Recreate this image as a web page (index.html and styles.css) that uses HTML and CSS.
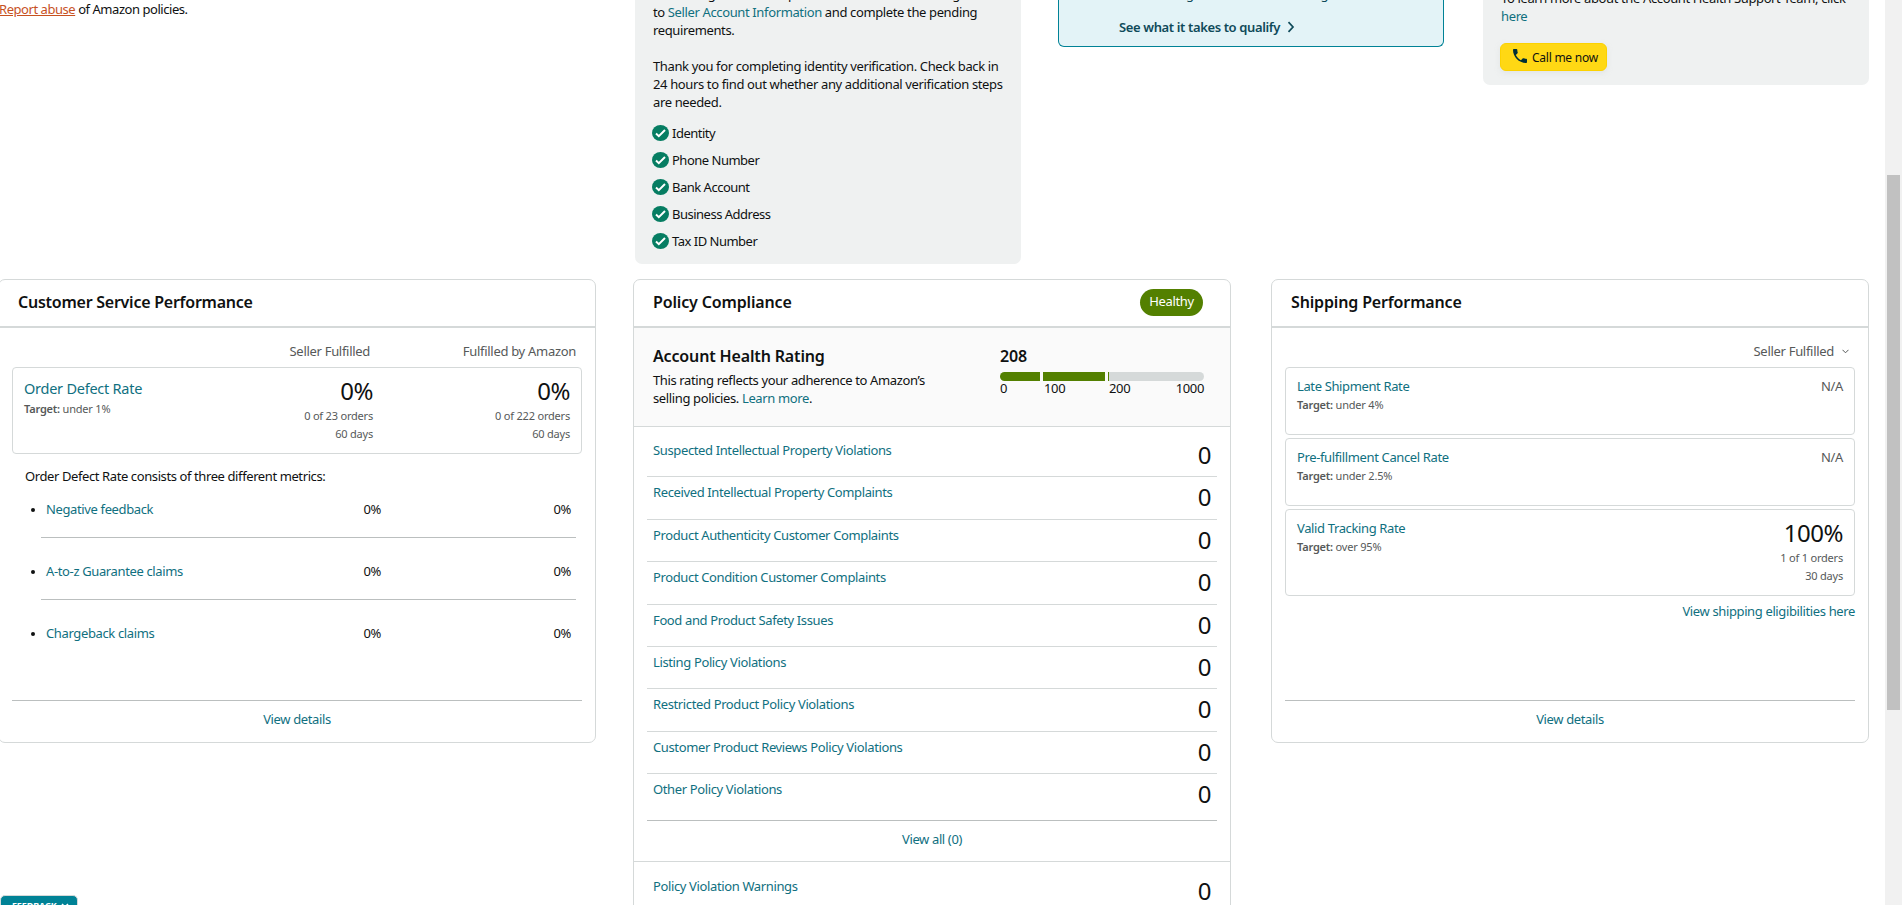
FILE: index.html
```html
<!DOCTYPE html>
<html lang="en">
<head>
    <meta charset="UTF-8">
    <meta name="viewport" content="width=device-width, initial-scale=1.0">
    <title>Account Health</title>
    <link rel="stylesheet" href="styles.css">
</head>
<body>
    <svg class="defs" width="0" height="0">
        <symbol id="check" viewBox="0 0 17 16">
            <ellipse cx="8.5" cy="8" rx="8.5" ry="8" fill="#067d62"/>
            <path d="M4 8.6l2.8 2.6L13 5" fill="none" stroke="#fff" stroke-width="2"/>
        </symbol>
    </svg>

    <main class="page">
        <section class="top">
            <p class="report"><a class="report-link" href="#">Report abuse</a> of Amazon policies.</p>

            <div class="panel verify">
                <p>be missing some other piece of information or selling<br>to <a href="#">Seller Account Information</a> and complete the pending<br>requirements.</p>
                <p>Thank you for completing identity verification. Check back in<br>24 hours to find out whether any additional verification steps<br>are needed.</p>
                <ul class="checks">
                    <li><svg class="check"><use href="#check"/></svg>Identity</li>
                    <li><svg class="check"><use href="#check"/></svg>Phone Number</li>
                    <li><svg class="check"><use href="#check"/></svg>Bank Account</li>
                    <li><svg class="check"><use href="#check"/></svg>Business Address</li>
                    <li><svg class="check"><use href="#check"/></svg>Tax ID Number</li>
                </ul>
            </div>

            <div class="panel qualify">
                <p class="qualify-text">deactivating without first reaching out</p>
                <a class="qualify-link" href="#">See what it takes to qualify
                    <svg width="8" height="12" viewBox="0 0 8 12"><path d="M1.5 1.2L6 6l-4.5 4.8" fill="none" stroke="#0f4a5a" stroke-width="1.7"/></svg>
                </a>
            </div>

            <div class="panel support">
                <p>To learn more about the Account Health Support Team, click<br><a href="#">here</a></p>
                <button class="call">
                    <svg width="14" height="14" viewBox="3 3 18 18"><path fill="#002f36" d="M6.62 10.79c1.44 2.83 3.76 5.14 6.59 6.59l2.2-2.2c.27-.27.67-.36 1.02-.24 1.12.37 2.33.57 3.57.57.55 0 1 .45 1 1V20c0 .55-.45 1-1 1-9.390 0-17-7.610-17-17 0-.55.45-1 1-1h3.5c.55 0 1 .45 1 1 0 1.25.2 2.45.57 3.57.11.35.03.74-.25 1.02l-2.2 2.2z"/></svg>
                    <span>Call me now</span>
                </button>
            </div>
        </section>

        <section class="cards">
            <div class="card service">
                <h2 class="card-title">Customer Service Performance</h2>
                <div class="card-body">
                    <div class="columns"><span>Seller Fulfilled</span><span>Fulfilled by Amazon</span></div>
                    <div class="metric metric-main">
                        <div class="metric-name">
                            <a href="#">Order Defect Rate</a>
                            <small><b>Target:</b> under 1%</small>
                        </div>
                        <div class="metric-value">
                            <strong>0%</strong>
                            <small>0 of 23 orders</small>
                            <small>60 days</small>
                        </div>
                        <div class="metric-value">
                            <strong>0%</strong>
                            <small>0 of 222 orders</small>
                            <small>60 days</small>
                        </div>
                    </div>
                    <p class="consists">Order Defect Rate consists of three different metrics:</p>
                    <ul class="sub-metrics">
                        <li><a href="#">Negative feedback</a><span>0%</span><span>0%</span></li>
                        <li><a href="#">A-to-z Guarantee claims</a><span>0%</span><span>0%</span></li>
                        <li><a href="#">Chargeback claims</a><span>0%</span><span>0%</span></li>
                    </ul>
                    <div class="card-footer"><a href="#">View details</a></div>
                </div>
            </div>

            <div class="card policy">
                <div class="card-title">
                    <h2>Policy Compliance</h2>
                    <span class="badge">Healthy</span>
                </div>
                <div class="rating">
                    <div class="rating-text">
                        <h2>Account Health Rating</h2>
                        <p>This rating reflects your adherence to Amazon’s<br>selling policies. <a href="#">Learn more</a>.</p>
                    </div>
                    <div class="rating-score">
                        <h2>208</h2>
                        <div class="bar"><i></i><i></i><i></i></div>
                        <div class="scale"><span>0</span><span>100</span><span>200</span><span>1000</span></div>
                    </div>
                </div>
                <ul class="violations">
                    <li><a href="#">Suspected Intellectual Property Violations</a><span>0</span></li>
                    <li><a href="#">Received Intellectual Property Complaints</a><span>0</span></li>
                    <li><a href="#">Product Authenticity Customer Complaints</a><span>0</span></li>
                    <li><a href="#">Product Condition Customer Complaints</a><span>0</span></li>
                    <li><a href="#">Food and Product Safety Issues</a><span>0</span></li>
                    <li><a href="#">Listing Policy Violations</a><span>0</span></li>
                    <li><a href="#">Restricted Product Policy Violations</a><span>0</span></li>
                    <li><a href="#">Customer Product Reviews Policy Violations</a><span>0</span></li>
                    <li><a href="#">Other Policy Violations</a><span>0</span></li>
                </ul>
                <div class="view-all"><a href="#">View all (0)</a></div>
                <ul class="violations warnings">
                    <li><a href="#">Policy Violation Warnings</a><span>0</span></li>
                </ul>
            </div>

            <div class="card shipping">
                <h2 class="card-title">Shipping Performance</h2>
                <div class="card-body">
                    <div class="columns">
                        <span>Seller Fulfilled</span>
                        <svg width="7" height="5" viewBox="0 0 7 5"><path d="M.5.8l3 3 3-3" fill="none" stroke="#565959"/></svg>
                    </div>
                    <div class="metric">
                        <div class="metric-name">
                            <a href="#">Late Shipment Rate</a>
                            <small><b>Target:</b> under 4%</small>
                        </div>
                        <div class="metric-value na">N/A</div>
                    </div>
                    <div class="metric">
                        <div class="metric-name">
                            <a href="#">Pre-fulfillment Cancel Rate</a>
                            <small><b>Target:</b> under 2.5%</small>
                        </div>
                        <div class="metric-value na">N/A</div>
                    </div>
                    <div class="metric tracking">
                        <div class="metric-name">
                            <a href="#">Valid Tracking Rate</a>
                            <small><b>Target:</b> over 95%</small>
                        </div>
                        <div class="metric-value">
                            <strong>100%</strong>
                            <small>1 of 1 orders</small>
                            <small>30 days</small>
                        </div>
                    </div>
                    <a class="eligibilities" href="#">View shipping eligibilities here</a>
                    <div class="card-footer"><a href="#">View details</a></div>
                </div>
            </div>
        </section>
    </main>

    <div class="scrollbar"><div class="thumb"></div></div>
    <button class="feedback">FEEDBACK
        <svg width="8" height="6" viewBox="0 0 8 6"><path d="M1 1l3 3 3-3" fill="none" stroke="#fff" stroke-width="1.5"/></svg>
    </button>
</body>
</html>
```

FILE: styles.css
```css
* {
    box-sizing: border-box;
}
body {
    margin: 0;
    height: 905px;
    overflow: hidden;
    display: flex;
    font-family: "Noto Sans", "Open Sans", sans-serif;
    font-size: 13px;
    line-height: 18px;
    letter-spacing: -0.37px;
    color: #0f1111;
    background: #fff;
}
h2, p, ul {
    margin: 0;
    padding: 0;
}
ul {
    list-style: none;
}
a {
    color: #10707f;
    text-decoration: none;
}
h2 {
    font-size: 16px;
    line-height: 24px;
    font-weight: 600;
    letter-spacing: -0.15px;
}
.defs {
    position: absolute;
}
.page {
    flex: 1;
    height: 905px;
    overflow: hidden;
}

/* top panels */
.top {
    display: grid;
    grid-template-columns: 635px 386px 386px 386px;
    align-items: start;
    height: 279px;
}
.report {
    margin-left: -1px;
    letter-spacing: -0.45px;
}
.report-link {
    color: #c7511f;
    text-decoration: underline;
}
.panel {
    border-radius: 0 0 7px 7px;
    background: #eff1f1;
}
.verify {
    height: 264px;
    padding: 0 18px;
    white-space: nowrap;
}
.verify p {
    margin-top: -15px;
}
.verify p + p {
    margin-top: 18px;
}
.checks {
    margin-top: 8px;
    letter-spacing: -0.5px;
}
.checks li {
    display: flex;
    align-items: center;
    height: 27px;
    gap: 3px;
}
.check {
    width: 17px;
    height: 16px;
    margin-left: -1px;
}
.top .qualify {
    margin-left: 37px;
    width: 386px;
    height: 47px;
    padding: 0 60px;
    background: #e3f3f7;
    border: 1px solid #008296;
    border-top: 0;
    border-radius: 0 0 6px 6px;
}
.qualify-text {
    margin-top: -15px;
    color: #0f4a5a;
    letter-spacing: 0;
}
.qualify-link {
    display: flex;
    align-items: center;
    gap: 7px;
    margin-top: 15px;
    color: #0f4a5a;
    font-weight: 600;
}
.support {
    margin-left: 76px;
    width: 386px;
    height: 85px;
    padding: 0 18px;
    white-space: nowrap;
}
.support p {
    margin-top: -11px;
}
.support p + .call {
    margin: 18px 0 0 -1px;
}
.call {
    display: flex;
    align-items: center;
    gap: 5px;
    width: 107px;
    height: 28px;
    padding: 0 0 0 12px;
    border: 1px solid #fcd200;
    border-radius: 6px;
    background: #ffd814;
    box-shadow: 0 2px 5px rgba(213, 217, 217, .5);
    font: inherit;
    font-size: 12px;
    letter-spacing: -0.25px;
    color: #0f1111;
}
.call span {
    margin-top: 2px;
}
.call svg {
    margin-top: -2px;
}

/* cards */
.cards {
    display: flex;
    align-items: flex-start;
    gap: 37px;
    margin-left: -2px;
}
.card {
    width: 598px;
    height: 464px;
    border: 1px solid #d5d9d9;
    border-radius: 7px;
}
.card + .shipping {
    margin-left: 3px;
}
.policy {
    height: 700px;
}
.card-title {
    display: flex;
    justify-content: space-between;
    height: 48px;
    padding: 10px 27px 0 19px;
    border-bottom: 2px solid #d5d9d9;
}
.service .card-title {
    letter-spacing: -0.25px;
}
.badge {
    width: 63px;
    height: 27px;
    margin-top: -1px;
    border-radius: 14px;
    background: #538000;
    color: #fff;
    line-height: 25px;
    text-align: center;
}
.card-body {
    display: flex;
    flex-direction: column;
    height: 414px;
    padding: 14px 13px 0;
}
.columns {
    display: flex;
    justify-content: flex-end;
    height: 25px;
    letter-spacing: -0.3px;
    color: #565959;
}
.service .columns {
    padding-right: 6px;
}
.service .columns span:last-child {
    width: 206px;
    text-align: right;
}
.shipping .columns {
    padding-right: 6px;
    gap: 8px;
}
.shipping .columns svg {
    margin-top: 7px;
}
.metric {
    display: flex;
    height: 68px;
    margin-bottom: 3px;
    padding: 9px 11px;
    border: 1px solid #d5d9d9;
    border-radius: 4px;
}
.metric-main,
.tracking {
    height: 87px;
}
.metric-name {
    flex: 1;
}
.metric small {
    display: block;
    font-size: 11px;
    letter-spacing: -0.2px;
    color: #565959;
}
.metric small b {
    font-weight: 600;
}
.metric-name small {
    margin-top: 1px;
}
.metric-main .metric-name a {
    display: block;
    font-size: 14.5px;
    line-height: 22px;
    letter-spacing: -0.25px;
}
.metric-value {
    width: 197px;
    text-align: right;
}
.metric-value strong {
    display: block;
    height: 30px;
    font-size: 24px;
    line-height: 27px;
    font-weight: 400;
    letter-spacing: -0.5px;
}
.na {
    color: #565959;
}
.consists {
    margin: 10px 0 0 13px;
    letter-spacing: -0.4px;
}
.sub-metrics {
    margin: 0 6px 0 29px;
}
.sub-metrics li {
    display: flex;
    height: 62px;
    padding: 24px 5px 0 6px;
}
.sub-metrics li:first-child {
    height: 52px;
    padding-top: 15px;
}
.sub-metrics li + li {
    border-top: 1px solid #bbbfbf;
}
.sub-metrics li::before {
    content: "";
    width: 4px;
    height: 4px;
    margin: 8px 11px 0 -16px;
    border-radius: 50%;
    background: #0f1111;
}
.sub-metrics a {
    flex: 1;
}
.sub-metrics span {
    width: 190px;
    text-align: right;
}
.card-footer {
    margin-top: auto;
    height: 42px;
    padding-top: 9px;
    border-top: 1px solid #bbbfbf;
    text-align: center;
}
.eligibilities {
    align-self: flex-end;
    margin-top: 3px;
}

/* account health rating */
.rating {
    display: flex;
    justify-content: space-between;
    height: 99px;
    padding: 17px 26px 0 19px;
    background: #fafafa;
    border-bottom: 1px solid #d5d9d9;
}
.rating h2 {
    margin-top: -1px;
}
.rating p {
    margin-top: 3px;
}
.rating-score {
    width: 204px;
}
.bar {
    display: flex;
    gap: 3px;
    height: 9px;
    margin-top: 4px;
    border-radius: 5px;
    overflow: hidden;
}
.bar i {
    width: 40px;
    background: #538000;
}
.bar i + i {
    width: 62px;
}
.bar i:last-child {
    flex: 1;
    background: #d5d9d9;
    border-left: 1px solid #538000;
}
.scale {
    display: grid;
    grid-template-columns: 44px 65px 1fr auto;
    line-height: 15px;
}
.violations {
    padding: 8px 13px 0;
}
.violations li {
    display: flex;
    justify-content: space-between;
    height: 42.4px;
    padding: 6px 6px 0;
    border-bottom: 1px solid #d5d9d9;
}
.violations span {
    font-size: 24px;
    line-height: 28px;
}
.violations li:last-child {
    height: 47px;
    border-color: #bbbfbf;
}
.warnings {
    padding-top: 9px;
}
.view-all {
    height: 41px;
    padding-top: 9px;
    border-bottom: 1px solid #d5d9d9;
    text-align: center;
}

/* window scrollbar and feedback tab */
.scrollbar {
    width: 17px;
    height: 905px;
    padding: 175px 2px 0;
    background: #f1f1f1;
}
.thumb {
    height: 535px;
    background: #c1c1c1;
}
.feedback {
    position: fixed;
    left: 0;
    top: 895px;
    display: flex;
    align-items: flex-start;
    gap: 4px;
    width: 78px;
    height: 28px;
    padding: 4px 0 0 11px;
    border: 1px solid #d5d9d9;
    border-radius: 5px;
    background: #008296;
    color: #fff;
    font: 700 9px/12px "Noto Sans", sans-serif;
    letter-spacing: -0.1px;
}
.feedback svg {
    margin-top: 3px;
}
```
